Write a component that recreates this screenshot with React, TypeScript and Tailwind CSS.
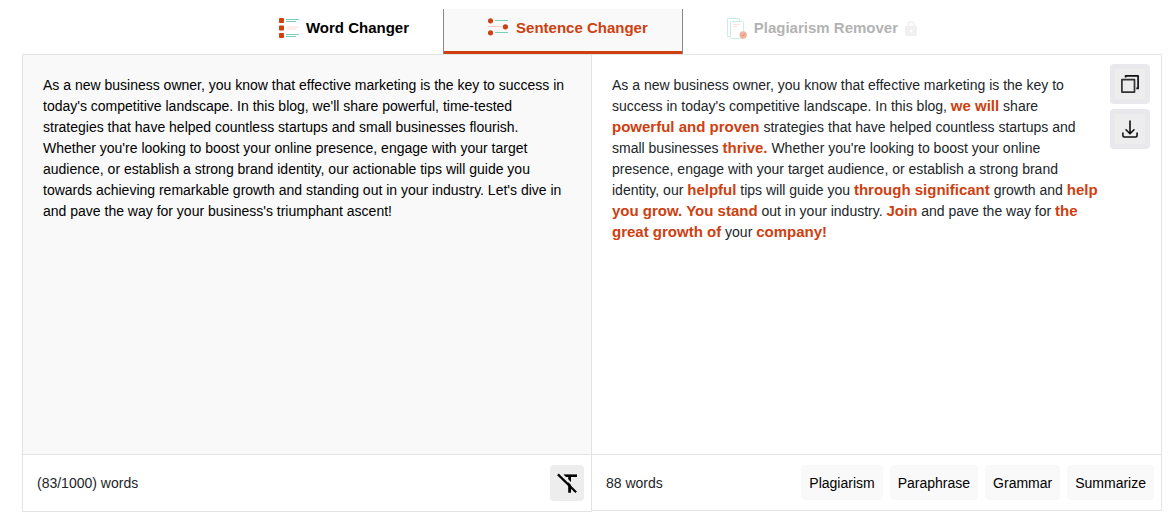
import { useState } from "react";

const sourceText =
  "As a new business owner, you know that effective marketing is the key to success in today's competitive landscape. In this blog, we'll share powerful, time-tested strategies that have helped countless startups and small businesses flourish. Whether you're looking to boost your online presence, engage with your target audience, or establish a strong brand identity, our actionable tips will guide you towards achieving remarkable growth and standing out in your industry. Let's dive in and pave the way for your business's triumphant ascent!";

const resultParts = [
  { text: "As a new business owner, you know that effective marketing is the key to success in today's competitive landscape. In this blog, " },
  { text: "we will", changed: true },
  { text: " share " },
  { text: "powerful and proven", changed: true },
  { text: " strategies that have helped countless startups and small businesses " },
  { text: "thrive.", changed: true },
  { text: " Whether you're looking to boost your online presence, engage with your target audience, or establish a strong brand identity, our " },
  { text: "helpful", changed: true },
  { text: " tips will guide you " },
  { text: "through significant", changed: true },
  { text: " growth and " },
  { text: "help you grow. You stand", changed: true },
  { text: " out in your industry. " },
  { text: "Join", changed: true },
  { text: " and pave the way for " },
  { text: "the great growth of", changed: true },
  { text: " your " },
  { text: "company!", changed: true },
];

const tools = ["Plagiarism", "Paraphrase", "Grammar", "Summarize"];

function WordIcon() {
  return (
    <svg width="20" height="20" viewBox="0 0 20 20" aria-hidden="true">
      <g fill="#ce4010">
        <rect width="5" height="5" rx="1" />
        <rect y="7.5" width="5" height="5" rx="1" />
        <rect y="15" width="5" height="5" rx="1" />
      </g>
      <path d="M7 1.5h13M7 3.5h10M7 16.5h13M7 18.5h10" stroke="#7bcdb8" />
      <path d="M7 9h13M7 11h10" stroke="#ffdcda" />
    </svg>
  );
}

function SentenceIcon() {
  return (
    <svg width="20" height="18" viewBox="0 0 20 18" aria-hidden="true">
      <path d="M7 2.5h13M7 14.5h13" stroke="#7bcdb8" />
      <path d="M0 8.5h13" stroke="#ffc9c6" />
      <g fill="#ce4010">
        <circle cx="2.5" cy="2.8" r="2.6" />
        <circle cx="17.4" cy="8.8" r="2.6" />
        <circle cx="2.5" cy="14.8" r="2.6" />
      </g>
    </svg>
  );
}

function PagesIcon() {
  return (
    <svg width="20" height="21" viewBox="0 0 20 21" fill="none" aria-hidden="true">
      <path d="M3.5 18.5h-3V.5h12v3" stroke="#caeee5" />
      <rect x="3.5" y="3.5" width="13" height="17" rx="1" fill="#fff" stroke="#caeee5" />
      <path d="M6 6.5h7M6 8.5h4" stroke="#fde3df" />
      <circle cx="16.2" cy="17" r="3.7" fill="#f0b49e" />
      <path d="m14.8 17 1 1 2-2" stroke="#d98d78" />
    </svg>
  );
}

function LockIcon() {
  return (
    <svg width="12" height="15" viewBox="0 0 12 15" aria-hidden="true">
      <path d="M2.8 6V4a3.2 3.2 0 0 1 6.4 0v2" fill="none" stroke="#f0f0f0" strokeWidth="1.4" />
      <rect y="5" width="12" height="10" rx="1" fill="#f0f0f0" />
      <circle cx="6" cy="10" r="1.5" fill="#fff" />
    </svg>
  );
}

function CopyIcon() {
  return (
    <svg width="18" height="18" viewBox="0 0 18 18" fill="none" stroke="#111" strokeWidth="1.7" strokeLinejoin="round" aria-hidden="true">
      <rect x="0.9" y="4.6" width="12.6" height="12.5" stroke="#333" />
      <path d="M4.6 2.6V.9h12.5v12.5h-1.8" />
    </svg>
  );
}

function DownloadIcon() {
  return (
    <svg width="16" height="18" viewBox="0 0 16 18" fill="none" stroke="#111" strokeWidth="1.6" strokeLinecap="round" strokeLinejoin="round" aria-hidden="true">
      <path d="M8 1v12.5M4 9.8l4 4 4-4M.9 13v2.6a1.4 1.4 0 0 0 1.4 1.4h11.4a1.4 1.4 0 0 0 1.4-1.4V13" />
    </svg>
  );
}

function ClearIcon() {
  return (
    <svg width="20" height="22" viewBox="0 0 20 22" fill="none" stroke="#000" aria-hidden="true">
      <path d="M6.5 3.7h13.8" strokeWidth="2.6" />
      <path d="M12.6 3.7v17" strokeWidth="2.8" />
      <path d="m3 .5 17.5 17.5" stroke="#ededed" strokeWidth="2" />
      <path d="m.9 2.4 18.2 17.8" strokeWidth="2.2" />
    </svg>
  );
}

export default function App() {
  const [text, setText] = useState(sourceText);

  return (
    <main className="bg-white pt-[9px] pr-[14px] pl-[22px] font-['Liberation_Sans',Arial,sans-serif] text-sm text-[#212529]">
      <nav className="flex h-[45px] justify-center pl-[2px] text-[15px] font-bold">
        <button className="flex items-center gap-[7px] pr-[34px] pb-[7px] pl-11 text-black">
          <WordIcon />
          Word Changer
        </button>
        <button className="flex items-center border-x border-[#888] bg-[#f9f9f9] pr-[34px] pl-11 text-[#ce4010] shadow-[inset_0_-3px_#ce4010]">
          <span className="flex items-center gap-2 pb-2">
            <SentenceIcon />
            Sentence Changer
          </span>
        </button>
        <button className="flex items-center gap-[7px] pr-[34px] pb-[7px] pl-11 text-[#b3b3b3]" disabled>
          <PagesIcon />
          Plagiarism Remover
          <LockIcon />
        </button>
      </nav>

      <div className="grid grid-cols-2 items-start">
        <section className="border-y border-l border-[#e3e3e3]">
          <textarea
            aria-label="Text to change"
            className="block h-[399px] w-full resize-none bg-[#f9f9f9] p-5 leading-[21px] text-black outline-none"
            value={text}
            onChange={(e) => setText(e.target.value)}
          />
          <div className="flex h-[57px] items-center justify-between border-t border-[#e3e3e3] pr-2 pl-[14px]">
            <span>(83/1000) words</span>
            <button
              aria-label="Clear text"
              className="flex h-9 w-[34px] items-center justify-center rounded bg-[#ededed]"
              onClick={() => setText("")}
            >
              <ClearIcon />
            </button>
          </div>
        </section>

        <section className="-ml-px border border-[#e3e3e3] bg-white">
          <div className="flex h-[399px] justify-between">
            <p className="flex-1 py-5 pr-[10px] pl-5 leading-[21px]">
              {resultParts.map((part, i) =>
                part.changed ? (
                  <b key={i} className="text-[15px] leading-none text-[#ce4010]">
                    {part.text}
                  </b>
                ) : (
                  part.text
                ),
              )}
            </p>
            <div className="flex flex-col gap-[5px] pt-[9px] pr-[11px]">
              <button
                aria-label="Copy"
                className="flex size-10 items-center justify-center rounded border-5 border-[#e9e9ed] bg-[#ededed]"
              >
                <CopyIcon />
              </button>
              <button
                aria-label="Download"
                className="flex size-10 items-center justify-center rounded border-5 border-[#e9e9ed] bg-[#ededed]"
              >
                <DownloadIcon />
              </button>
            </div>
          </div>
          <div className="flex h-14 items-center justify-between border-t border-[#e3e3e3] pr-[7px] pl-[14px]">
            <span>88 words</span>
            <div className="flex gap-[7px] text-black">
              {tools.map((tool) => (
                <button key={tool} className="h-[35px] rounded bg-[#f9f9f9] px-2">
                  {tool}
                </button>
              ))}
            </div>
          </div>
        </section>
      </div>
    </main>
  );
}
